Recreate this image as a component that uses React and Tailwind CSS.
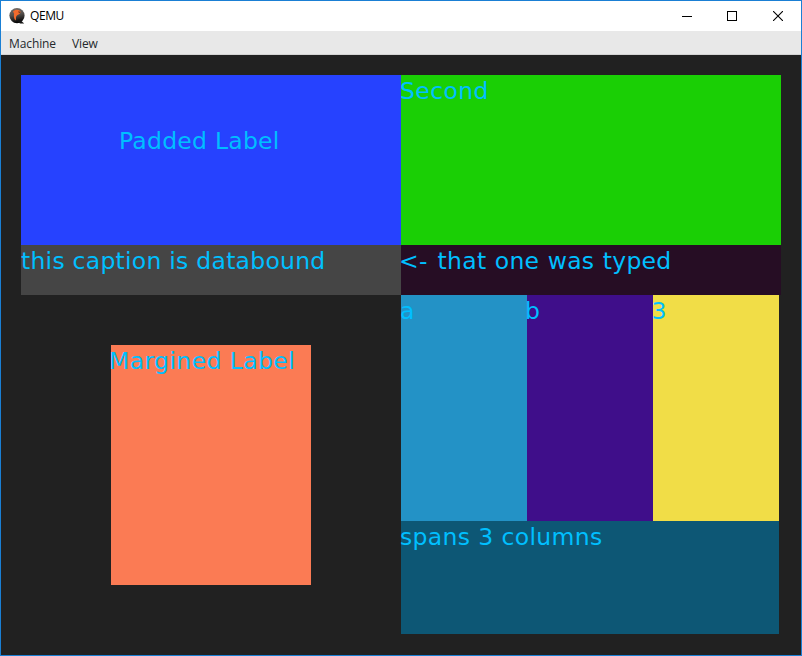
import React from "react";

function QemuIcon() {
  return (
    <svg width="16" height="16" viewBox="0 0 16 16" className="shrink-0">
      <defs>
        <linearGradient id="ball" x1="0" y1="0" x2="0.2" y2="1">
          <stop offset="0" stopColor="#77726e" />
          <stop offset="0.5" stopColor="#55504d" />
          <stop offset="1" stopColor="#080808" />
        </linearGradient>
      </defs>
      <circle cx="8" cy="7.6" r="7.6" fill="url(#ball)" />
      <path d="M10 11l5.200 4.500h-4.200L8.500 13z" fill="#151515" />
      <path d="M4 3.500C5.500 1.600 8.500 1 10.600 2.400c1.100.8 1.200 1.900.4 2.900-.8 1-1.500 1.300-2.500 1.800-1.200.7-1.700 2.100-1.500 4.100L6.400 12.600C5 10.600 4.500 8.200 5.100 5.800z" fill="#f36a2c" />
      <path d="M9.500 3.200l2 1.100-1.700.5z" fill="#1b1513" />
    </svg>
  );
}

function Label({ children, className = "" }) {
  return (
    <span className={`block whitespace-pre pt-[2px] text-[23.5px] leading-[28px] text-[#00bfff] ${className}`}>
      {children}
    </span>
  );
}

function TitleBar() {
  return (
    <header className="flex h-[30px] items-center bg-white pl-2 text-black">
      <QemuIcon />
      <span className="ml-[5px] font-['Open_Sans',sans-serif] text-[12px] leading-4 tracking-[-0.4px]">QEMU</span>
      <div className="ml-auto flex h-full">
        <div className="flex w-[45px] items-center justify-center">
          <svg width="10" height="10" shapeRendering="crispEdges"><path d="M0 5h10v1H0z" /></svg>
        </div>
        <div className="flex w-[46px] items-center justify-center">
          <svg width="10" height="10" shapeRendering="crispEdges"><path d="M.5.5h9v9h-9z" fill="none" stroke="#000" /></svg>
        </div>
        <div className="flex w-[46px] items-center justify-center">
          <svg width="10" height="10"><path d="M0 0l10 10M10 0L0 10" stroke="#000" strokeWidth="1.1" /></svg>
        </div>
      </div>
    </header>
  );
}

export default function App() {
  return (
    <div className="flex h-[656px] w-[802px] flex-col overflow-hidden border border-[#1a7fd4] bg-[#212121] font-['DejaVu_Sans',sans-serif]">
      <TitleBar />
      <nav className="flex h-6 shrink-0 items-center gap-4 border-b border-[#d4d4d4] bg-[#e8e8e8] pl-2 pt-[2px] font-['Open_Sans',sans-serif] text-[12px] tracking-[-0.1px] text-[#24282c]">
        <span>Machine</span>
        <span>View</span>
      </nav>
      <main className="grid grid-cols-[380px_380px] grid-rows-[170px_50px_340px] p-5">
        <div className="bg-[#2642ff] pl-[98px] pt-[50px]">
          <Label className="tracking-[0.25px]">Padded Label</Label>
        </div>
        <div className="bg-[#1acf05]">
          <Label className="-ml-[1px] tracking-[0.4px]">Second</Label>
        </div>
        <div className="bg-[#454545]">
          <Label className="tracking-[0.25px]">this caption is databound</Label>
        </div>
        <div className="bg-[#260d24]">
          <Label className="-ml-[2px] tracking-[0.3px] [word-spacing:0.5px]">
            <span className="mr-[1.5px]">&lt;-</span> that one was typed
          </Label>
        </div>
        <div className="mx-[90px] my-[50px] bg-[#fb7b54]">
          <Label className="-ml-[2px] tracking-[0.4px]">Margined Label</Label>
        </div>
        <div className="grid grid-cols-[126px_126px_126px] grid-rows-[226px_113px]">
          <div className="bg-[#2392c6]">
            <Label className="-ml-[1px]">a</Label>
          </div>
          <div className="bg-[#3f0e8a]">
            <Label className="-ml-[2px]">b</Label>
          </div>
          <div className="bg-[#f1dd47]">
            <Label className="-ml-[1.5px]">3</Label>
          </div>
          <div className="col-span-3 bg-[#0d5775]">
            <Label className="-ml-[1px] tracking-[0.35px]">spans 3 columns</Label>
          </div>
        </div>
      </main>
    </div>
  );
}
